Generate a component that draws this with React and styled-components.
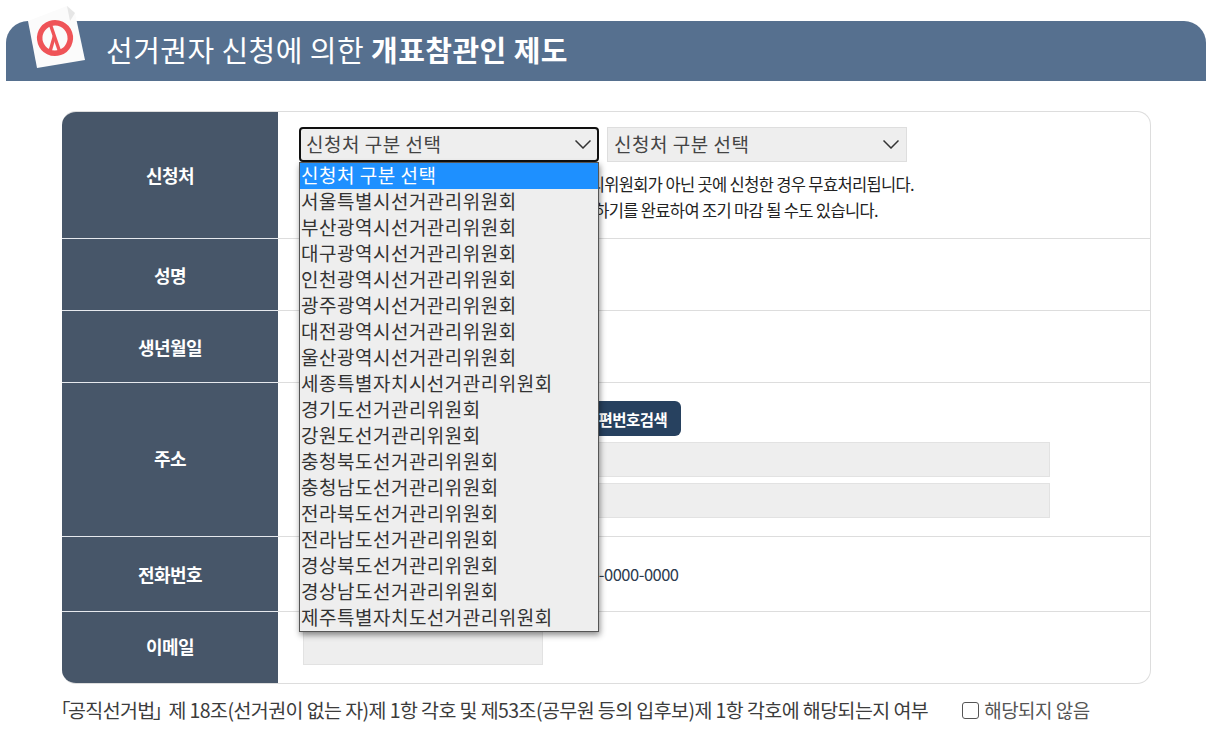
import styled, { createGlobalStyle } from "styled-components";

const GlobalStyle = createGlobalStyle`
  html, body {
    margin: 0;
    padding: 0;
    background: #fff;
    font-family: "Noto Sans CJK KR", "Noto Sans", sans-serif;
  }
`;

const Page = styled.div`
  width: 1216px;
  height: 746px;
  overflow: hidden;
  padding-top: 21px;
  box-sizing: border-box;
`;

const Header = styled.header`
  position: relative;
  display: flex;
  align-items: center;
  margin: 0 10px 0 6px;
  height: 60px;
  padding-left: 100px;
  padding-bottom: 3px;
  box-sizing: border-box;
  background: #56708f;
  border-radius: 22px 22px 0 0;
`;

const Title = styled.h1`
  margin: 0;
  color: #fff;
  font-size: 29px;
  font-weight: 400;
  letter-spacing: 0.45px;
  line-height: 1;
  strong {
    font-weight: 700;
  }
`;

const Ballot = styled.svg`
  position: absolute;
  left: 20px;
  top: -16px;
`;

const Table = styled.div`
  width: 1089px;
  height: 573px;
  margin: 30px 0 0 62px;
  border: 1px solid #dddddd;
  border-left: 0;
  border-radius: 14px;
  box-sizing: border-box;
  overflow: hidden;
  display: grid;
  grid-template-rows: 126px 72px 72px 154px 75px 1fr;
`;

const Row = styled.div`
  display: flex;
  border-top: ${({ $first }) => ($first ? "0" : "1px solid #dddddd")};
  box-sizing: border-box;
  min-height: 0;
`;

const Label = styled.div`
  flex: 0 0 216px;
  display: flex;
  align-items: center;
  justify-content: center;
  padding-bottom: ${({ $lift }) => ($lift ? "4px" : "0")};
  background: #475669;
  color: #fff;
  font-size: 18px;
  font-weight: 700;
  letter-spacing: -0.6px;
  margin-top: ${({ $first }) => ($first ? "0" : "-1px")};
  border-top: ${({ $first }) => ($first ? "0" : "1px solid #e6e9ee")};
`;

const Cell = styled.div`
  flex: 1;
  display: flex;
  flex-direction: column;
  justify-content: ${({ $top }) => ($top ? "flex-start" : "center")};
  gap: 6px;
  padding: ${({ $top }) => ($top ? "15px 0 0 25px" : "0 0 0 25px")};
  min-width: 0;
`;

const SelectRow = styled.div`
  position: relative;
  display: flex;
  gap: 8px;
  margin-left: -4px;
  margin-bottom: 3px;
`;

const SelectBox = styled.div`
  width: 300px;
  height: 35px;
  display: flex;
  align-items: center;
  justify-content: space-between;
  padding: ${({ $focused }) => ($focused ? "0 6px 3px 5px" : "0 7px 3px 6px")};
  box-sizing: border-box;
  background: #eeeeee;
  color: #444;
  font-size: 19px;
  letter-spacing: 0.5px;
  border: ${({ $focused }) => ($focused ? "2px solid #101010" : "1px solid #dedede")};
  border-radius: ${({ $focused }) => ($focused ? "4px" : "0")};
  svg {
    flex: none;
    margin-top: 3px;
  }
`;

const Dropdown = styled.ul`
  position: absolute;
  left: 0;
  top: 35px;
  z-index: 5;
  width: 300px;
  height: 470px;
  margin: 0;
  padding: 0;
  box-sizing: border-box;
  list-style: none;
  background: #eeeeee;
  border: 1px solid #555;
  box-shadow: 1px 3px 6px rgba(0, 0, 0, 0.45);
`;

const Option = styled.li`
  height: 26px;
  line-height: 24px;
  padding-left: 1px;
  font-size: 19px;
  letter-spacing: 0.5px;
  white-space: nowrap;
  background: ${({ $active }) => ($active ? "#1e90ff" : "transparent")};
  color: ${({ $active }) => ($active ? "#fff" : "#333")};
`;

const Note = styled.p`
  margin: 0;
  color: #222;
  font-size: 16.5px;
  line-height: 26px;
  letter-spacing: -0.65px;
  white-space: nowrap;
`;

const Input = styled.div`
  width: ${({ $width }) => $width}px;
  height: 35px;
  flex: none;
  box-sizing: border-box;
  background: #eeeeee;
  border: 1px solid #e2e2e2;
`;

const InlineRow = styled.div`
  display: flex;
  align-items: center;
  gap: 8px;
`;

const SearchButton = styled.button`
  width: 108px;
  height: 35px;
  padding: 0 2px 0 0;
  border: 0;
  border-radius: 6px;
  background: #27415f;
  color: #fff;
  font-family: inherit;
  font-size: 15.5px;
  font-weight: 700;
  letter-spacing: -0.5px;
`;

const Phone = styled.div`
  color: #2b3a4d;
  font-size: 16.5px;
  letter-spacing: -0.5px;
  white-space: nowrap;
`;

const Footer = styled.div`
  display: flex;
  align-items: center;
  margin: 14px 0 0 60px;
  color: #3c3c3c;
  font-size: 19.5px;
  letter-spacing: -0.58px;
  line-height: 24px;
  white-space: pre;
`;

const Bracket = styled.span`
  margin: ${({ $close }) => ($close ? "0 -7px 0 -2px" : "0 -2px 0 -9px")};
`;

const CheckLabel = styled.label`
  display: flex;
  align-items: center;
  gap: 5px;
  margin-left: 34px;
  color: #555;
  font-size: 19px;
  letter-spacing: -0.5px;
`;

const Checkbox = styled.input`
  appearance: none;
  width: 17px;
  height: 17px;
  margin: 0;
  background: #fff;
  border: 1px solid #555;
  border-radius: 3px;
`;

const offices = [
  "서울특별시선거관리위원회",
  "부산광역시선거관리위원회",
  "대구광역시선거관리위원회",
  "인천광역시선거관리위원회",
  "광주광역시선거관리위원회",
  "대전광역시선거관리위원회",
  "울산광역시선거관리위원회",
  "세종특별자치시선거관리위원회",
  "경기도선거관리위원회",
  "강원도선거관리위원회",
  "충청북도선거관리위원회",
  "충청남도선거관리위원회",
  "전라북도선거관리위원회",
  "전라남도선거관리위원회",
  "경상북도선거관리위원회",
  "경상남도선거관리위원회",
  "제주특별자치도선거관리위원회",
];

const Chevron = () => (
  <svg width="16" height="9" viewBox="0 0 16 9" fill="none" stroke="#333" strokeWidth="1.5">
    <path d="M0.5 0.5l7.5 7.5 7.5-7.5" />
  </svg>
);

function App() {
  return (
    <Page>
      <GlobalStyle />
      <Header>
        <Ballot width="64" height="68" viewBox="0 0 64 68">
          <path d="M2 16 L41 1 L49 8 L59 55 L11 63 Z" fill="#fbfbfb" />
          <path d="M41 1 L49 8 L44 16 Z" fill="#e6e6e6" />
          <g transform="rotate(-19 29 33)" fill="none" stroke="#ef5458">
            <circle cx="29" cy="33" r="15.3" strokeWidth="5.5" />
            <path d="M29 18v30" strokeWidth="3.4" />
            <path d="M29 31l-9 13" strokeWidth="3.4" />
          </g>
        </Ballot>
        <Title>
          선거권자 신청에 의한 <strong>개표참관인 제도</strong>
        </Title>
      </Header>
      <Table>
        <Row $first>
          <Label $first>신청처</Label>
          <Cell $top>
            <SelectRow>
              <SelectBox $focused>
                신청처 구분 선택
                <Chevron />
              </SelectBox>
              <SelectBox>
                신청처 구분 선택
                <Chevron />
              </SelectBox>
              <Dropdown>
                <Option $active>신청처 구분 선택</Option>
                {offices.map((name) => (
                  <Option key={name}>{name}</Option>
                ))}
              </Dropdown>
            </SelectRow>
            <div>
              <Note>※ 신청인의 주소지를 관할하는 시·도 선거관리위원회가 아닌 곳에 신청한 경우 무효처리됩니다.</Note>
              <Note>※ 신청 인원이 많을 경우, 선거일 이전에 접수 하기를 완료하여 조기 마감 될 수도 있습니다.</Note>
            </div>
          </Cell>
        </Row>
        <Row>
          <Label>성명</Label>
          <Cell>
            <Input $width={240} />
          </Cell>
        </Row>
        <Row>
          <Label>생년월일</Label>
          <Cell>
            <Input $width={240} />
          </Cell>
        </Row>
        <Row>
          <Label $lift>주소</Label>
          <Cell>
            <InlineRow>
              <Input $width={262} />
              <SearchButton>우편번호검색</SearchButton>
            </InlineRow>
            <Input $width={747} />
            <Input $width={747} />
          </Cell>
        </Row>
        <Row>
          <Label>전화번호</Label>
          <Cell>
            <InlineRow>
              <Input $width={222} />
              <Phone>예시 : 010-0000-0000</Phone>
            </InlineRow>
          </Cell>
        </Row>
        <Row>
          <Label $lift>이메일</Label>
          <Cell>
            <Input $width={240} />
          </Cell>
        </Row>
      </Table>
      <Footer>
        <Bracket>「</Bracket>공직선거법<Bracket $close>」</Bracket>{" 제 18조(선거권이 없는 자)제 1항 각호 및 제53조(공무원 등의 입후보)제 1항 각호에 해당되는지 여부"}
        <CheckLabel>
          <Checkbox type="checkbox" />
          해당되지 않음
        </CheckLabel>
      </Footer>
    </Page>
  );
}

export default App;
